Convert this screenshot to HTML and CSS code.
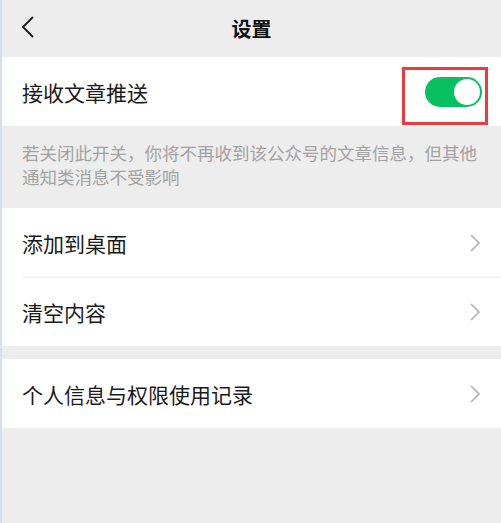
FILE: index.html
```html
<!DOCTYPE html>
<html lang="zh-CN">
<head>
  <meta charset="UTF-8">
  <meta name="viewport" content="width=device-width, initial-scale=1.0">
  <title>设置</title>
  <link rel="stylesheet" href="styles.css">
</head>
<body>
  <div class="page">
    <div class="header">
      <svg class="back" width="14" height="22" viewBox="0 0 14 22">
        <polyline points="12,1 2,11 12,21" fill="none" stroke="#1a1a1a" stroke-width="1.8"/>
      </svg>
      <div class="title">设置</div>
    </div>

    <div class="group">
      <div class="row switch-row">
        <span class="label">接收文章推送</span>
        <div class="switch on"><div class="knob"></div></div>
        <div class="mark"></div>
      </div>
    </div>

    <div class="hint">若关闭此开关，你将不再收到该公众号的文章信息，但其他通知类消息不受影响</div>

    <div class="group">
      <div class="row">
        <span class="label">添加到桌面</span>
        <svg class="arrow" width="10" height="18" viewBox="0 0 10 18">
          <polyline points="1,1 9,9 1,17" fill="none" stroke="#b2b2b2" stroke-width="1.6"/>
        </svg>
      </div>
      <div class="row">
        <span class="label">清空内容</span>
        <svg class="arrow" width="10" height="18" viewBox="0 0 10 18">
          <polyline points="1,1 9,9 1,17" fill="none" stroke="#b2b2b2" stroke-width="1.6"/>
        </svg>
      </div>
    </div>

    <div class="gap"></div>

    <div class="group">
      <div class="row">
        <span class="label">个人信息与权限使用记录</span>
        <svg class="arrow" width="10" height="18" viewBox="0 0 10 18">
          <polyline points="1,1 9,9 1,17" fill="none" stroke="#b2b2b2" stroke-width="1.6"/>
        </svg>
      </div>
    </div>
  </div>
</body>
</html>
```

FILE: styles.css
```css
body {
  margin: 0;
  font-family: "Noto Sans CJK SC", "Noto Sans", sans-serif;
  background: #ededed;
  color: #1a1a1a;
}

.page {
  min-height: 523px;
  border-left: 2px solid #d6e0ec;
  background: #ededed;
}

.header {
  height: 57px;
  display: flex;
  align-items: center;
  justify-content: center;
  position: relative;
}

.back {
  position: absolute;
  left: 19px;
  top: 16px;
}

.title {
  font-size: 20px;
  font-weight: 600;
  color: #111;
}

.group {
  background: #fff;
}

.row {
  height: 69px;
  display: flex;
  align-items: center;
  justify-content: space-between;
  padding: 0 21px 0 20px;
  position: relative;
}

.row + .row::before {
  content: "";
  position: absolute;
  left: 20px;
  right: 0;
  top: 0;
  height: 1px;
  background: #ececec;
}

.label {
  font-size: 21px;
}

.switch {
  width: 57px;
  height: 30px;
  border-radius: 15px;
  background: #07c160;
  margin-right: -2px;
  display: flex;
  align-items: center;
  justify-content: flex-end;
  padding: 0 2px;
  box-sizing: border-box;
}

.knob {
  width: 26px;
  height: 26px;
  border-radius: 50%;
  background: #fff;
}

.mark {
  position: absolute;
  left: 400px;
  top: 10px;
  width: 86px;
  height: 58px;
  border: 3px solid #f03a3a;
  box-sizing: border-box;
}

.hint {
  padding: 15px 20px 19px;
  font-size: 17.5px;
  line-height: 24px;
  color: #a3a3a3;
}

.gap {
  height: 13px;
}
```
